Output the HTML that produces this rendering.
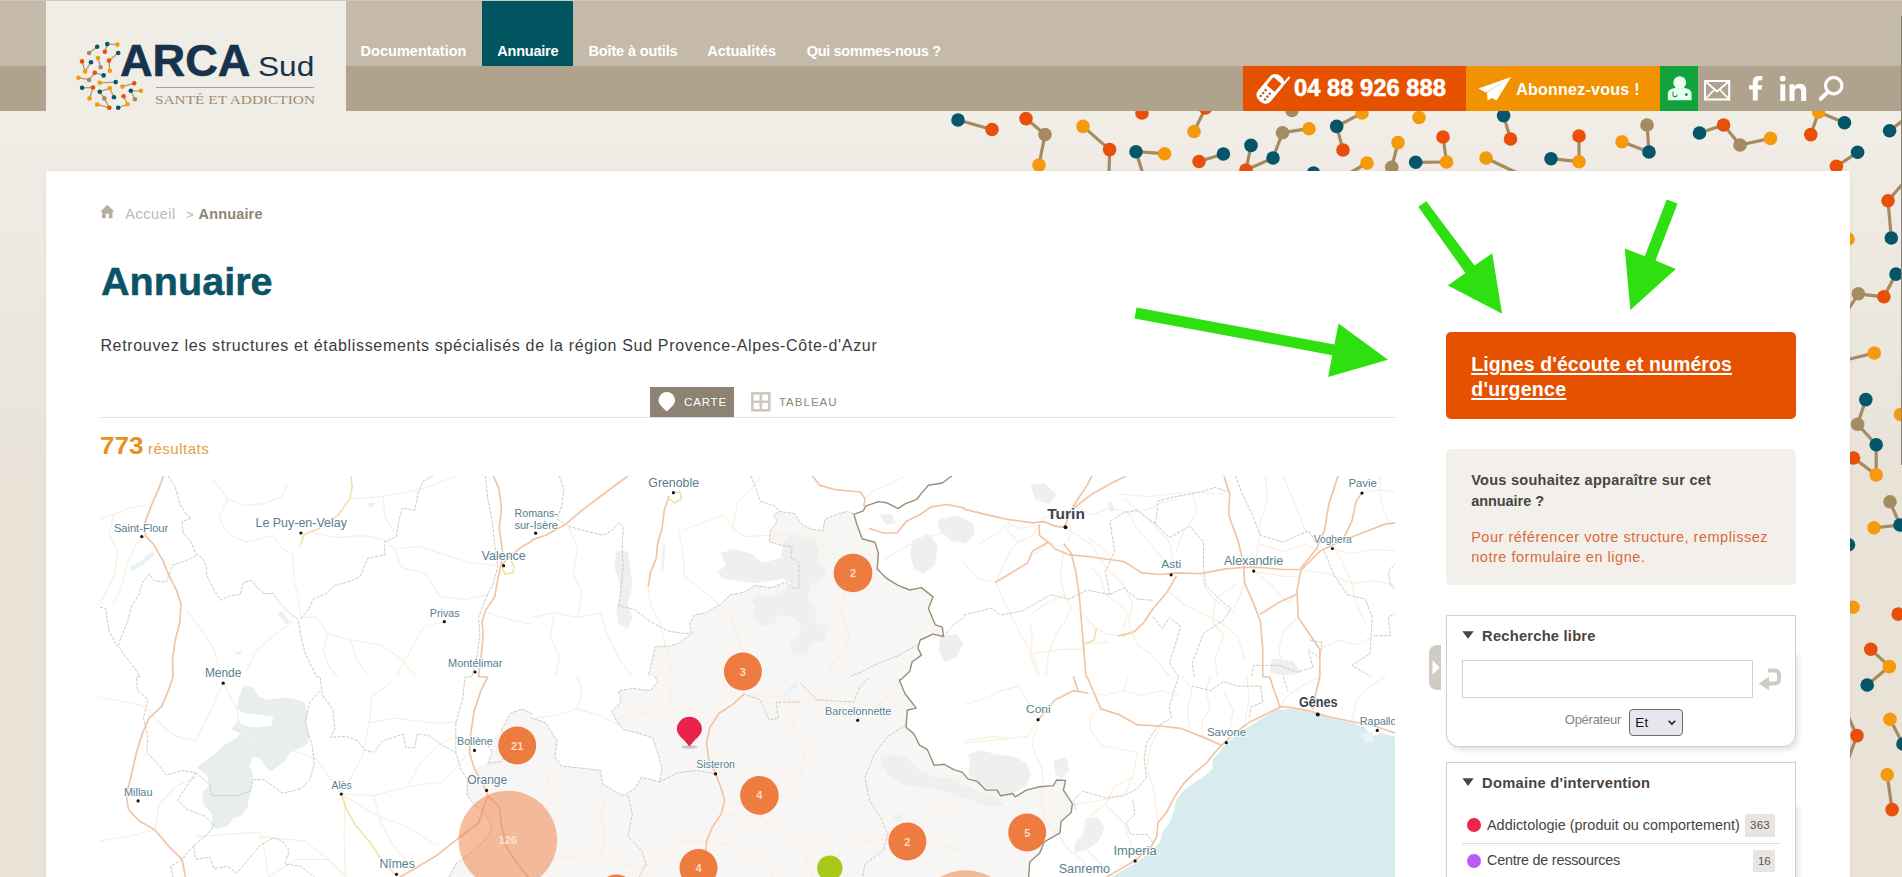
<!DOCTYPE html>
<html lang="fr">
<head>
<meta charset="utf-8">
<title>Annuaire - ARCA Sud</title>
<style>
*{box-sizing:border-box;margin:0;padding:0}
html,body{width:1902px;height:877px;overflow:hidden}
body{font-family:"Liberation Sans",sans-serif;background:linear-gradient(to bottom,#f1ede7 111px,#e8e2d7 500px);position:relative;color:#333}
.abs{position:absolute;white-space:nowrap;line-height:1}
.bx{position:absolute}
svg.full{position:absolute;left:0;top:0;width:1902px;height:877px;overflow:hidden}
</style>
</head>
<body>
<svg class="full" viewBox="0 0 1902 877"><g stroke="#a58b62" stroke-width="3.2" stroke-linecap="round"><line x1="958.0" y1="120.0" x2="992.0" y2="129.5"/><line x1="1026.0" y1="118.6" x2="1045.0" y2="134.5"/><line x1="1045.0" y1="134.5" x2="1039.0" y2="165.0"/><line x1="1083.0" y1="126.4" x2="1109.6" y2="149.6"/><line x1="1109.6" y1="149.6" x2="1109.0" y2="175.0"/><line x1="1136.0" y1="151.7" x2="1164.6" y2="153.7"/><line x1="1136.0" y1="151.7" x2="1143.0" y2="174.0"/><line x1="1194.0" y1="131.5" x2="1205.5" y2="108.0"/><line x1="1199.0" y1="161.5" x2="1223.4" y2="154.0"/><line x1="1251.0" y1="145.4" x2="1246.0" y2="170.0"/><line x1="1246.0" y1="170.0" x2="1273.0" y2="158.0"/><line x1="1273.0" y1="158.0" x2="1282.5" y2="132.7"/><line x1="1282.5" y1="132.7" x2="1309.0" y2="128.7"/><line x1="1336.7" y1="126.4" x2="1362.0" y2="113.0"/><line x1="1336.7" y1="126.4" x2="1343.0" y2="150.0"/><line x1="1398.0" y1="142.6" x2="1391.7" y2="167.3"/><line x1="1367.0" y1="163.0" x2="1350.0" y2="173.0"/><line x1="1415.7" y1="162.3" x2="1446.6" y2="162.0"/><line x1="1446.6" y1="162.0" x2="1443.0" y2="137.0"/><line x1="1503.6" y1="115.6" x2="1510.5" y2="139.0"/><line x1="1486.0" y1="158.0" x2="1515.0" y2="172.0"/><line x1="1579.0" y1="136.0" x2="1579.0" y2="161.7"/><line x1="1579.0" y1="161.7" x2="1551.0" y2="158.7"/><line x1="1647.0" y1="125.0" x2="1649.0" y2="152.0"/><line x1="1649.0" y1="152.0" x2="1622.0" y2="141.7"/><line x1="1699.5" y1="133.0" x2="1723.6" y2="125.0"/><line x1="1723.6" y1="125.0" x2="1740.0" y2="145.0"/><line x1="1740.0" y1="145.0" x2="1770.5" y2="138.4"/><line x1="1818.6" y1="112.0" x2="1810.8" y2="134.6"/><line x1="1818.6" y1="112.0" x2="1844.5" y2="122.7"/><line x1="1889.6" y1="130.8" x2="1906.0" y2="118.0"/><line x1="1857.6" y1="152.3" x2="1836.4" y2="166.3"/><line x1="1906.0" y1="180.0" x2="1888.0" y2="200.7"/><line x1="1888.0" y1="200.7" x2="1891.3" y2="238.0"/><line x1="1896.0" y1="274.1" x2="1883.9" y2="296.8"/><line x1="1883.9" y1="296.8" x2="1858.4" y2="293.8"/><line x1="1858.4" y1="293.8" x2="1846.0" y2="313.0"/><line x1="1874.3" y1="353.0" x2="1846.0" y2="360.0"/><line x1="1865.8" y1="399.6" x2="1857.6" y2="424.2"/><line x1="1857.6" y1="424.2" x2="1876.2" y2="444.8"/><line x1="1876.2" y1="444.8" x2="1876.2" y2="474.9"/><line x1="1876.2" y1="474.9" x2="1853.5" y2="458.0"/><line x1="1890.0" y1="501.8" x2="1900.0" y2="525.0"/><line x1="1900.0" y1="525.0" x2="1874.0" y2="527.8"/><line x1="1870.8" y1="649.3" x2="1889.4" y2="666.6"/><line x1="1889.4" y1="666.6" x2="1867.2" y2="685.0"/><line x1="1857.0" y1="735.6" x2="1846.0" y2="712.0"/><line x1="1857.0" y1="735.6" x2="1846.0" y2="765.0"/><line x1="1890.0" y1="719.2" x2="1903.0" y2="744.0"/><line x1="1887.2" y1="774.8" x2="1892.1" y2="809.6"/></g><g><circle cx="958.0" cy="120.0" r="6.8" fill="#05566a"/><circle cx="992.0" cy="129.5" r="6.8" fill="#e8500a"/><circle cx="1026.0" cy="118.6" r="6.8" fill="#e8500a"/><circle cx="1045.0" cy="134.5" r="6.8" fill="#a58b62"/><circle cx="1039.0" cy="165.0" r="6.8" fill="#f59a0c"/><circle cx="1083.0" cy="126.4" r="6.8" fill="#f59a0c"/><circle cx="1109.6" cy="149.6" r="6.8" fill="#e8500a"/><circle cx="1142.0" cy="113.0" r="6.8" fill="#e8500a"/><circle cx="1136.0" cy="151.7" r="6.8" fill="#05566a"/><circle cx="1164.6" cy="153.7" r="6.8" fill="#f59a0c"/><circle cx="1194.0" cy="131.5" r="6.8" fill="#f59a0c"/><circle cx="1205.5" cy="108.0" r="6.8" fill="#e8500a"/><circle cx="1199.0" cy="161.5" r="6.8" fill="#e8500a"/><circle cx="1223.4" cy="154.0" r="6.8" fill="#05566a"/><circle cx="1251.0" cy="145.4" r="6.8" fill="#05566a"/><circle cx="1246.0" cy="170.0" r="6.8" fill="#e8500a"/><circle cx="1273.0" cy="158.0" r="6.8" fill="#05566a"/><circle cx="1282.5" cy="132.7" r="6.8" fill="#a58b62"/><circle cx="1309.0" cy="128.7" r="6.8" fill="#f59a0c"/><circle cx="1292.0" cy="110.5" r="6.8" fill="#a58b62"/><circle cx="1336.7" cy="126.4" r="6.8" fill="#05566a"/><circle cx="1362.0" cy="113.0" r="6.8" fill="#f59a0c"/><circle cx="1343.0" cy="150.0" r="6.8" fill="#e8500a"/><circle cx="1398.0" cy="142.6" r="6.8" fill="#f59a0c"/><circle cx="1391.7" cy="167.3" r="6.8" fill="#a58b62"/><circle cx="1367.0" cy="163.0" r="6.8" fill="#f59a0c"/><circle cx="1313.5" cy="173.0" r="6.8" fill="#05566a"/><circle cx="1415.7" cy="162.3" r="6.8" fill="#05566a"/><circle cx="1446.6" cy="162.0" r="6.8" fill="#f59a0c"/><circle cx="1443.0" cy="137.0" r="6.8" fill="#e8500a"/><circle cx="1419.0" cy="117.5" r="6.8" fill="#f59a0c"/><circle cx="1503.6" cy="115.6" r="6.8" fill="#05566a"/><circle cx="1510.5" cy="139.0" r="6.8" fill="#e8500a"/><circle cx="1486.0" cy="158.0" r="6.8" fill="#f59a0c"/><circle cx="1579.0" cy="136.0" r="6.8" fill="#e8500a"/><circle cx="1579.0" cy="161.7" r="6.8" fill="#f59a0c"/><circle cx="1551.0" cy="158.7" r="6.8" fill="#05566a"/><circle cx="1647.0" cy="125.0" r="6.8" fill="#a58b62"/><circle cx="1649.0" cy="152.0" r="6.8" fill="#05566a"/><circle cx="1622.0" cy="141.7" r="6.8" fill="#f59a0c"/><circle cx="1699.5" cy="133.0" r="6.8" fill="#05566a"/><circle cx="1723.6" cy="125.0" r="6.8" fill="#e8500a"/><circle cx="1740.0" cy="145.0" r="6.8" fill="#a58b62"/><circle cx="1770.5" cy="138.4" r="6.8" fill="#f59a0c"/><circle cx="1818.6" cy="112.0" r="6.8" fill="#f59a0c"/><circle cx="1810.8" cy="134.6" r="6.8" fill="#e8500a"/><circle cx="1844.5" cy="122.7" r="6.8" fill="#05566a"/><circle cx="1889.6" cy="130.8" r="6.8" fill="#05566a"/><circle cx="1857.6" cy="152.3" r="6.8" fill="#05566a"/><circle cx="1836.4" cy="166.3" r="6.8" fill="#e8500a"/><circle cx="1888.0" cy="200.7" r="6.8" fill="#e8500a"/><circle cx="1891.3" cy="238.0" r="6.8" fill="#05566a"/><circle cx="1848.0" cy="239.0" r="6.8" fill="#f59a0c"/><circle cx="1896.0" cy="274.1" r="6.8" fill="#05566a"/><circle cx="1883.9" cy="296.8" r="6.8" fill="#e8500a"/><circle cx="1858.4" cy="293.8" r="6.8" fill="#a58b62"/><circle cx="1874.3" cy="353.0" r="6.8" fill="#f59a0c"/><circle cx="1865.8" cy="399.6" r="6.8" fill="#05566a"/><circle cx="1857.6" cy="424.2" r="6.8" fill="#a58b62"/><circle cx="1876.2" cy="444.8" r="6.8" fill="#05566a"/><circle cx="1876.2" cy="474.9" r="6.8" fill="#f59a0c"/><circle cx="1853.5" cy="458.0" r="6.8" fill="#e8500a"/><circle cx="1900.5" cy="414.5" r="6.8" fill="#f59a0c"/><circle cx="1890.0" cy="501.8" r="6.8" fill="#a58b62"/><circle cx="1900.0" cy="525.0" r="6.8" fill="#05566a"/><circle cx="1874.0" cy="527.8" r="6.8" fill="#f59a0c"/><circle cx="1848.5" cy="544.8" r="6.8" fill="#05566a"/><circle cx="1853.0" cy="607.3" r="6.8" fill="#f59a0c"/><circle cx="1898.2" cy="614.1" r="6.8" fill="#e8500a"/><circle cx="1870.8" cy="649.3" r="6.8" fill="#e8500a"/><circle cx="1889.4" cy="666.6" r="6.8" fill="#f59a0c"/><circle cx="1867.2" cy="685.0" r="6.8" fill="#05566a"/><circle cx="1857.0" cy="735.6" r="6.8" fill="#e8500a"/><circle cx="1890.0" cy="719.2" r="6.8" fill="#f59a0c"/><circle cx="1903.0" cy="744.0" r="6.8" fill="#05566a"/><circle cx="1887.2" cy="774.8" r="6.8" fill="#f59a0c"/><circle cx="1892.1" cy="809.6" r="6.8" fill="#e8500a"/></g></svg>
<div class="bx" style="left:0px;top:0px;width:1902px;height:66px;background:#c5baaa;"></div>
<div class="bx" style="left:0px;top:66px;width:1902px;height:45px;background:#b0a38d;"></div>
<div class="bx" style="left:46px;top:1px;width:300px;height:110px;background:#f0ece6;"></div>
<div class="bx" style="left:482px;top:1px;width:91px;height:65px;background:#005561;"></div>
<div class="bx" style="left:0px;top:0px;width:1902px;height:1px;background:#cdc8c2;"></div>
<div class="bx" style="left:1243px;top:66px;width:223px;height:45px;background:#e65100;"></div>
<div class="bx" style="left:1466px;top:66px;width:194px;height:45px;background:#f39200;"></div>
<div class="bx" style="left:1660px;top:66px;width:38px;height:45px;background:#14a23c;"></div>
<div class="bx" style="left:46px;top:171px;width:1804px;height:706px;background:#fff;box-shadow:0 0 3px rgba(90,70,40,.10);"></div>
<div class="bx" style="left:100px;top:417px;width:1295px;height:1px;background:#e4e2de;"></div>
<div class="bx" style="left:650px;top:387px;width:84px;height:30px;background:#8e8372;"></div>
<div class="bx" style="left:155.7px;top:87px;width:158.5px;height:1px;background:#9aa3ab;"></div>
<div class="bx" style="left:1446px;top:332px;width:350px;height:87px;background:#e65100;border-radius:5px;"></div>
<div class="bx" style="left:1446px;top:449px;width:350px;height:136px;background:#f3f0eb;border-radius:5px;"></div>
<div class="bx" style="left:1429px;top:645px;width:12px;height:45px;background:#d0ccc5;border-radius:8px 0 0 8px;"></div>
<div class="bx" style="left:1447px;top:652px;width:349px;height:95px;background:#fff;border-radius:0 0 13px 13px;box-shadow:2px 3px 5px rgba(110,100,90,.20);"></div>
<div class="bx" style="left:1447px;top:803px;width:349px;height:100px;background:#fff;box-shadow:2px 3px 5px rgba(110,100,90,.20);"></div>
<div class="bx" style="left:1446px;top:615px;width:350px;height:132px;background:#fff;border:1px solid #d3cfc8;border-radius:0 0 13px 13px;"></div>
<div class="bx" style="left:1446px;top:762px;width:350px;height:140px;background:#fff;border:1px solid #d3cfc8;"></div>
<div class="bx" style="left:1462px;top:660px;width:291px;height:38px;background:#fff;border:1px solid #d5d1ca;"></div>
<div class="bx" style="left:1629px;top:708.5px;width:53.7px;height:27.3px;background:#e6e6ef;border:1px solid #6b6b6b;border-radius:4px;"></div>
<div class="bx" style="left:1745px;top:814.2px;width:30.1px;height:22.5px;background:#e8e5e0;"></div>
<div class="bx" style="left:1752.6px;top:850px;width:22.5px;height:21.6px;background:#e8e5e0;"></div>
<div class="bx" style="left:1462px;top:843px;width:318px;height:1px;background:#e0ddd8;"></div>
<div class="bx" style="left:1466.7px;top:817.6px;width:14.4px;height:14.4px;background:#e8274b;border-radius:50%;"></div>
<div class="bx" style="left:1466.7px;top:853.5px;width:14.4px;height:14.4px;background:#b85cf5;border-radius:50%;"></div>
<div class="bx" style="left:1901px;top:16px;width:1px;height:449px;background:#857f76;"></div>
<svg class="full" viewBox="0 0 1902 877"><g stroke="#b9986a" stroke-width="1.3" stroke-linecap="round"><line x1="97.2" y1="46.8" x2="89.1" y2="53.0"/><line x1="107.3" y1="44.1" x2="117.4" y2="44.6"/><line x1="107.3" y1="44.1" x2="104.8" y2="51.8"/><line x1="118.2" y1="53.0" x2="109.0" y2="60.6"/><line x1="98.0" y1="58.0" x2="100.6" y2="67.3"/><line x1="82.0" y1="61.4" x2="85.1" y2="71.5"/><line x1="91.0" y1="62.2" x2="85.1" y2="71.5"/><line x1="109.0" y1="60.6" x2="109.8" y2="70.7"/><line x1="94.7" y1="72.7" x2="89.1" y2="79.9"/><line x1="78.4" y1="77.7" x2="89.1" y2="79.9"/><line x1="94.7" y1="72.7" x2="103.6" y2="75.4"/><line x1="99.7" y1="82.8" x2="115.7" y2="82.1"/><line x1="134.2" y1="83.3" x2="122.4" y2="86.6"/><line x1="82.1" y1="87.8" x2="93.0" y2="87.5"/><line x1="93.0" y1="87.5" x2="89.6" y2="98.4"/><line x1="109.8" y1="88.3" x2="99.7" y2="91.7"/><line x1="109.8" y1="88.3" x2="114.0" y2="97.2"/><line x1="130.8" y1="90.8" x2="140.9" y2="90.8"/><line x1="130.8" y1="90.8" x2="135.0" y2="99.3"/><line x1="104.3" y1="98.4" x2="109.3" y2="107.7"/><line x1="97.2" y1="104.6" x2="109.3" y2="107.7"/><line x1="123.6" y1="96.2" x2="127.5" y2="104.3"/><line x1="118.2" y1="107.7" x2="127.5" y2="104.3"/><line x1="104.3" y1="98.4" x2="99.7" y2="91.7"/></g><circle cx="97.2" cy="46.8" r="2.3" fill="#05566a"/><circle cx="107.3" cy="44.1" r="2.3" fill="#05566a"/><circle cx="117.4" cy="44.6" r="2.3" fill="#f59a0c"/><circle cx="89.1" cy="53.0" r="2.3" fill="#a58b62"/><circle cx="104.8" cy="51.8" r="2.3" fill="#e8500a"/><circle cx="118.2" cy="53.0" r="2.3" fill="#05566a"/><circle cx="98.0" cy="58.0" r="2.3" fill="#f59a0c"/><circle cx="82.0" cy="61.4" r="2.3" fill="#e8500a"/><circle cx="91.0" cy="62.2" r="2.3" fill="#05566a"/><circle cx="109.0" cy="60.6" r="2.3" fill="#e8500a"/><circle cx="100.6" cy="67.3" r="2.3" fill="#a58b62"/><circle cx="85.1" cy="71.5" r="2.3" fill="#f59a0c"/><circle cx="94.7" cy="72.7" r="2.3" fill="#e8500a"/><circle cx="103.6" cy="75.4" r="2.3" fill="#05566a"/><circle cx="109.8" cy="70.7" r="2.3" fill="#f59a0c"/><circle cx="78.4" cy="77.7" r="2.3" fill="#f59a0c"/><circle cx="89.1" cy="79.9" r="2.3" fill="#a58b62"/><circle cx="99.7" cy="82.8" r="2.3" fill="#f59a0c"/><circle cx="115.7" cy="82.1" r="2.3" fill="#05566a"/><circle cx="134.2" cy="83.3" r="2.3" fill="#e8500a"/><circle cx="122.4" cy="86.6" r="2.3" fill="#f59a0c"/><circle cx="82.1" cy="87.8" r="2.3" fill="#05566a"/><circle cx="93.0" cy="87.5" r="2.3" fill="#e8500a"/><circle cx="109.8" cy="88.3" r="2.3" fill="#f59a0c"/><circle cx="99.7" cy="91.7" r="2.3" fill="#05566a"/><circle cx="130.8" cy="90.8" r="2.3" fill="#05566a"/><circle cx="140.9" cy="90.8" r="2.3" fill="#f59a0c"/><circle cx="89.6" cy="98.4" r="2.3" fill="#f59a0c"/><circle cx="104.3" cy="98.4" r="2.3" fill="#a58b62"/><circle cx="114.0" cy="97.2" r="2.3" fill="#05566a"/><circle cx="123.6" cy="96.2" r="2.3" fill="#e8500a"/><circle cx="135.0" cy="99.3" r="2.3" fill="#a58b62"/><circle cx="97.2" cy="104.6" r="2.3" fill="#f59a0c"/><circle cx="109.3" cy="107.7" r="2.3" fill="#e8500a"/><circle cx="118.2" cy="107.7" r="2.3" fill="#05566a"/><circle cx="127.5" cy="104.3" r="2.3" fill="#f59a0c"/><g transform="translate(1270.4,88.8) rotate(40)"><rect x="-8.3" y="-16.2" width="16.6" height="32.4" rx="7" fill="#fff"/><rect x="-5.2" y="-11" width="10.4" height="10.6" fill="#e65100"/><g fill="#b4532a"><rect x="-3.9" y="3" width="2.2" height="2.2"/><rect x="1.6" y="3" width="2.2" height="2.2"/><rect x="-3.9" y="6.8" width="2.2" height="2.2"/><rect x="1.6" y="6.8" width="2.2" height="2.2"/><rect x="-3.9" y="10.6" width="2.2" height="2.2"/><rect x="1.6" y="10.6" width="2.2" height="2.2"/></g><rect x="6" y="-21.5" width="2.1" height="9" fill="#fff"/></g><path d="M1478.4 88.5L1511 77L1486 92.6Z M1487 92.6L1511 77L1496.6 100.4L1491.7 97.9L1487.6 100.6Z" fill="#fff"/><circle cx="1679.7" cy="82.6" r="6.4" fill="#e6fff0"/><path d="M1667.8 100.2v-6.2q0-4.6 5-5.6l3-.6q3.9 2.6 7.8 0l3 .6q5 1 5 5.6v6.2z" fill="#e6fff0"/><path d="M1673 91.5v3.2a2 2 0 0 0 4 0" fill="none" stroke="#14a23c" stroke-width="1.1"/><circle cx="1686.3" cy="94.5" r="1.5" fill="#14a23c"/><g fill="none" stroke="#fff" stroke-width="2"><rect x="1705" y="81" width="24.2" height="18.5"/><path d="M1705 81l12.1 10.5L1729.2 81M1705 99.5l9-9.5M1729.2 99.5l-9-9.5" stroke-width="1.8"/></g><path d="M1752.8 100.5v-11h-3.8v-4.3h3.8v-3.3q0-5.8 6-5.8h3.5v4.2h-2.3q-2.2 0-2.2 2.1v2.8h4.4l-.6 4.3h-3.8v11z" fill="#fff"/><g fill="#fff"><rect x="1780.3" y="84.3" width="5" height="16.6"/><circle cx="1782.8" cy="78.6" r="2.9"/><path d="M1789.5 84.3h4.8v2.3q1.8-2.8 5.6-2.8 6.3 0 6.3 7v10.1h-5v-9q0-3.7-3.1-3.7-3.6 0-3.6 4v8.7h-5z"/></g><g fill="none" stroke="#fff" stroke-linecap="round"><circle cx="1833.7" cy="85.6" r="8.2" stroke-width="3.2"/><path d="M1827.2 92.6L1820.8 98.8" stroke-width="4"/></g><path d="M100.3 211.8L107.3 204.8L114.3 211.8h-1.8v6.5h-3.6v-4.6h-3.2v4.6h-3.6v-6.5z" fill="#b5ae9f"/><path d="M666.8 392a8.3 8.3 0 0 1 8.3 8.3c0 4.2-4.6 7.6-8.3 11.3c-3.7-3.7-8.3-7.1-8.3-11.3a8.3 8.3 0 0 1 8.3-8.3z" fill="#fff"/><g fill="none" stroke="#cfc8bd" stroke-width="2.6"><rect x="752.3" y="393.3" width="17" height="17"/><path d="M760.8 393v17.6M752 401.8h17.6"/></g><path d="M1462.4 631.2h11.3l-5.65 7.6z M1462.4 778.3h11.3l-5.65 7.6z" fill="#4a443c"/><path d="M1432.5 660.3l7.2 7.2l-7.2 7.2z" fill="#fff"/><path d="M1768 670.5h6.5q4.5 0 4.5 4.5v4q0 4.5-4.5 4.5h-6.5" fill="none" stroke="#d0ccc5" stroke-width="4"/><path d="M1758.6 683.5l10.5-7v14z" fill="#d0ccc5"/><path d="M1668.6 720.8l3.3 3.3l3.3-3.3" fill="none" stroke="#222" stroke-width="1.6"/></svg>
<svg class="full" viewBox="0 0 1902 877"><defs><clipPath id="mc"><rect x="100" y="476" width="1295" height="401"/></clipPath></defs><g clip-path="url(#mc)"><rect x="100" y="476" width="1296" height="401" fill="#fff"/><path d="M853.6 513.6L846.8 511.4L835.4 514.8L825.1 519.3L822.8 530.7L812.6 529.6L802.3 525.0L794.3 513.6L779.5 511.4L773.8 514.8L777.2 521.6L770.4 530.7L769.2 542.1L782.9 545.6L792.0 546.7L790.9 558.1L798.9 562.7L798.9 587.8L792.0 587.8L785.2 582.1L771.5 587.8L754.4 585.5L744.1 592.3L730.4 594.6L721.3 603.7L705.4 612.9L694.0 615.1L689.4 624.3L691.7 633.4L678.0 643.7L668.9 645.9L655.2 647.1L648.3 676.0L655.2 677.0L657.5 681.6L650.6 690.7L632.4 688.4L618.7 690.7L621.0 702.1L611.8 711.2L616.4 720.3L623.2 729.5L641.5 734.0L652.9 738.6L657.5 752.3L662.0 768.2L659.7 781.9L641.5 777.4L634.6 788.8L623.2 795.6L614.1 791.1L602.7 784.2L600.4 770.5L582.2 768.2L561.7 766.0L554.8 756.8L557.1 740.9L545.7 722.6L532.0 718.1L532.0 713.5L522.0 708.9L510.6 713.5L501.5 729.5L487.8 745.4L492.3 752.3L487.8 763.7L474.1 768.2L467.2 779.6L467.2 795.6L474.1 804.7L485.5 813.9L492.3 827.5L487.8 836.7L474.1 850.4L455.8 864.0L449.0 877.0L450.0 880.0L1030.0 880.0L1028.5 878.9L1029.7 862.0L1039.8 853.0L1044.3 841.8L1060.0 832.8L1061.1 821.6L1071.2 812.6L1072.4 803.6L1063.4 790.1L1065.6 780.4L1056.6 780.0L1053.3 785.6L1039.8 786.7L1026.3 790.1L1015.1 796.9L1012.8 793.5L1000.4 795.7L997.1 790.1L985.8 790.1L976.9 781.1L967.9 778.9L962.2 772.1L954.4 769.9L944.3 764.3L934.2 765.4L927.4 749.7L919.6 745.2L913.9 733.9L906.1 727.2L907.2 710.3L916.2 708.1L904.9 693.5L899.3 680.0L900.5 680.0L909.8 671.3L912.1 662.0L921.4 655.1L917.9 648.1L920.2 640.0L933.0 634.1L943.5 636.5L942.3 627.2L935.3 624.8L928.4 608.6L933.0 596.9L921.4 587.6L909.8 590.0L898.1 585.3L886.5 578.3L877.2 569.0L878.4 552.7L874.9 542.3L862.1 538.8L856.3 522.5L854.0 514.4Z" fill="#f7f6f4"/><g fill="#e8eeec"><path d="M243.9 685.5L253.0 687.3L258.5 696.4L267.6 700.1L278.5 698.2L291.3 698.2L304.1 701.9L307.7 712.8L305.9 723.8L309.6 734.7L307.7 743.9L296.8 749.3L289.5 753.0L285.8 760.3L278.5 765.8L271.2 771.2L265.8 767.6L260.3 758.5L253.0 756.6L249.3 765.8L253.0 774.9L251.2 785.8L249.3 796.8L247.5 807.7L242.0 815.0L232.9 818.7L227.4 826.0L216.5 829.6L211.0 826.0L212.8 815.0L203.7 804.1L201.9 793.1L209.2 785.8L207.4 774.9L196.4 767.6L203.7 762.1L216.5 753.0L225.6 743.9L236.6 738.4L240.2 732.9L231.1 729.3L238.4 720.1L242.0 725.6L256.6 727.4L271.2 725.6L273.1 716.5L260.3 714.7L243.9 712.8L236.6 709.2L238.4 698.2Z"/></g><g fill="#edf0ee"><path d="M880.2 758.7L893.7 754.2L904.9 756.4L918.4 769.9L934.2 776.6L949.9 778.9L965.6 785.6L981.3 792.4L999.3 799.1L1003.8 805.8L985.8 805.8L967.9 799.1L949.9 792.4L927.4 787.9L904.9 785.6L887.0 774.4Z"/><path d="M967.9 754.2L981.3 749.7L994.8 754.2L1012.8 756.4L1026.3 763.1L1030.8 774.4L1026.3 785.6L1015.1 792.4L1000.4 794.6L985.8 787.9L976.9 781.1L967.9 774.4L970.1 763.1Z"/><path d="M1053.3 760.9L1066.7 756.4L1069.0 769.9L1062.2 778.9L1055.5 774.4Z"/><path d="M1084.7 819.3L1098.2 817.1L1104.9 828.3L1098.2 841.8L1084.7 850.8L1073.5 853.0L1075.7 841.8L1084.7 832.8Z"/><path d="M937.7 520.2L956.3 515.5L972.6 522.5L974.9 534.1L965.6 543.4L951.6 541.1L940.0 531.8Z"/><path d="M912.1 541.1L928.4 534.1L937.7 545.8L935.3 564.4L923.7 573.7L914.4 569.0L909.8 555.1Z"/><path d="M940.0 636.5L956.3 634.1L963.3 643.4L956.3 657.4L944.7 662.0L938.8 650.4Z"/><path d="M879.5 515.5L891.2 513.2L895.8 522.5L886.5 524.8Z"/><path d="M1030.7 485.3L1044.7 483.0L1056.3 494.6L1049.3 503.9L1035.3 499.3Z"/><path d="M720.2 553.6L732.7 549.0L751.0 553.6L762.4 562.7L780.6 558.1L782.9 544.4L789.8 535.3L801.2 537.6L814.8 539.9L819.4 551.3L817.1 562.7L826.3 567.2L824.0 578.6L810.3 585.5L808.0 599.2L817.1 612.9L814.8 622.0L828.5 626.5L824.0 640.2L810.3 644.8L805.7 653.9L794.3 653.9L789.8 644.8L798.9 635.7L801.2 624.3L792.0 617.4L778.4 615.1L773.8 624.3L760.1 626.5L753.3 617.4L755.5 606.0L751.0 599.2L760.1 594.6L771.5 596.9L785.2 590.1L789.8 583.2L782.9 578.6L769.2 580.9L755.5 583.2L737.3 580.9L721.3 578.6L717.9 571.8L725.9 565.0Z"/><path d="M616.4 551.3L627.8 551.3L630.1 567.2L632.4 585.5L627.8 603.7L632.4 617.4L627.8 628.8L618.7 624.3L616.4 608.3L621.0 594.6L618.7 578.6L614.1 567.2Z"/><path d="M1271.9 658.5L1292.5 660.8L1301.6 672.2L1283.3 676.0L1269.7 672.2Z"/></g><path d="M1110.0 877.7L1123.7 869.7L1137.4 861.8L1153.3 850.4L1160.2 841.2L1162.4 832.1L1169.3 823.0L1173.9 811.6L1176.1 800.2L1183.0 791.1L1192.1 784.2L1205.8 775.1L1212.6 768.2L1212.6 759.1L1219.5 752.3L1226.3 743.1L1237.7 734.0L1251.4 724.9L1262.8 718.1L1276.5 710.1L1290.2 708.9L1306.2 711.2L1319.8 714.6L1333.5 719.2L1351.8 722.6L1365.5 728.3L1372.3 736.3L1381.4 732.9L1397.4 737.4L1397.4 877.7Z" fill="#d8ebef"/><g fill="#e9f3f6"><path d="M129.7 567.2L141.1 560.4L152.5 551.3L154.7 554.7L143.3 565.0L131.9 571.8Z"/><path d="M276.8 612.9L282.5 611.7L290.5 622.0L285.9 624.3Z"/><path d="M366.9 503.4L373.7 502.2L374.9 505.7L369.2 506.8Z"/><path d="M234.6 651.6L241.4 651.2L241.9 654.4L235.7 654.6Z"/><path d="M782.9 693.0L789.8 686.1L796.6 681.6L798.9 685.0L792.0 690.7L785.2 696.4Z"/><path d="M892.4 816.1L901.5 813.9L902.7 820.7L894.7 821.8Z"/><path d="M663.2 544.4L665.4 544.4L664.3 562.7L662.0 576.4L660.9 562.7Z"/><path d="M1107.7 503.4L1112.3 502.2L1114.5 510.2L1110.0 512.5Z"/><path d="M1360.9 734.0L1372.3 731.7L1373.4 740.9L1365.5 743.1Z"/></g><g fill="none" stroke-linejoin="round" stroke-linecap="round"><g stroke="#fbeee0" stroke-width="1.2"><path d="M1041.6 521.6L1032.4 535.3L1018.7 542.1L1009.6 551.3L1002.8 567.2L995.9 582.1"/><path d="M1039.3 525.0L1021.0 528.5L1009.6 523.9L1007.3 530.7L1018.7 542.1"/><path d="M1048.4 542.1L1039.3 551.3L1030.1 555.8"/><path d="M1064.4 544.4L1062.1 562.7L1059.8 576.4L1064.4 594.6L1071.2 608.3L1064.4 622.0L1055.2 635.7L1048.4 653.9L1046.1 676.0"/><path d="M1030.1 622.0L1032.4 640.2L1030.1 653.9L1037.0 676.0"/><path d="M1032.4 612.9L1046.1 603.7L1064.4 594.6"/><path d="M1082.6 612.9L1091.7 624.3L1096.3 628.8L1105.4 633.4L1119.1 635.7"/><path d="M1087.2 537.6L1100.9 546.7L1110.0 555.8"/><path d="M1091.7 567.2L1100.9 578.6L1105.4 594.6L1119.1 603.7L1128.2 612.9L1123.7 626.5"/><path d="M1073.5 505.7L1091.7 514.8L1110.0 507.9L1128.2 512.5L1146.5 510.2L1160.2 503.4L1178.4 498.8"/><path d="M1128.2 512.5L1137.4 528.5L1151.0 544.4L1162.4 558.1L1169.3 567.2"/><path d="M1039.3 525.0L1043.8 517.1L1055.2 514.8L1066.6 519.3L1071.2 528.5L1068.9 539.9L1059.8 546.7L1048.4 542.1"/><path d="M1260.5 544.4L1283.3 551.3L1306.2 544.4L1319.8 551.3"/><path d="M1301.6 569.5L1329.0 574.1L1351.8 583.2L1374.6 580.9L1396.0 585.5"/><path d="M1333.5 544.4L1342.6 562.7L1351.8 583.2L1356.3 603.7L1365.5 622.0"/><path d="M1201.2 573.6L1205.8 590.1L1219.5 603.7L1233.2 612.9L1244.6 583.2"/><path d="M1298.2 617.4L1283.3 631.1L1278.8 649.4L1283.3 676.0"/><path d="M1319.8 649.4L1338.1 640.2L1356.3 644.8L1374.6 635.7"/><path d="M964.0 704.4L982.2 699.8L1000.5 690.7L1018.7 686.1L1038.1 719.7"/><path d="M1087.2 693.0L1105.4 695.2L1123.7 690.7L1141.9 695.2L1160.2 690.7L1178.4 695.2"/><path d="M1123.7 690.7L1128.2 677.0"/><path d="M1279.9 706.7L1287.9 695.2L1301.6 686.1L1319.8 677.0"/><path d="M1203.5 737.4L1201.2 722.6L1210.4 708.9L1205.8 690.7L1210.4 677.0"/><path d="M1059.8 836.7L1068.9 850.4L1082.6 859.5L1091.7 877.0"/><path d="M1105.4 804.7L1091.7 813.9L1082.6 832.1L1087.2 850.4L1100.9 864.0L1110.0 877.0"/><path d="M113.7 514.8L109.1 535.3L118.2 553.6L113.7 576.4L104.6 594.6L100.0 603.7"/><path d="M145.6 535.8L136.5 544.4L127.4 562.7L122.8 583.2L113.7 603.7"/><path d="M227.7 498.8L218.6 517.1L227.7 533.0L246.0 542.1L273.4 535.3"/><path d="M328.1 633.4L323.5 649.4L328.1 665.3L337.2 676.0"/><path d="M385.1 539.9L394.3 549.0"/><path d="M350.9 640.2L355.5 658.5L369.2 676.0"/><path d="M145.6 706.7L159.3 722.6L175.3 736.3L195.8 740.9L223.2 683.2"/><path d="M154.7 829.8L159.3 804.7L175.3 786.5L195.8 777.4"/><path d="M268.8 877.0L296.2 859.5L328.1 859.5"/><path d="M373.7 795.6L380.6 823.0L396.5 850.4L414.8 868.6"/><path d="M407.9 786.5L419.3 763.7L437.6 745.4L455.8 736.3"/><path d="M369.2 722.6L396.5 718.1L428.5 722.6L455.8 722.6"/><path d="M554.8 612.9L550.2 635.7L559.4 658.5L554.8 676.0"/><path d="M577.6 617.4L582.2 594.6L573.1 571.8L577.6 549.0L568.5 526.2"/><path d="M732.7 528.5L737.3 503.4L751.0 489.7L760.1 476.0"/><path d="M865.0 498.8L874.2 489.7L887.8 485.1L906.1 476.0"/><path d="M577.6 708.9L582.2 690.7L577.6 677.0"/><path d="M600.4 859.5L605.0 836.7L600.4 813.9L607.3 795.6"/><path d="M706.5 841.2L737.3 845.8L760.1 859.5L773.8 877.0"/><path d="M810.3 850.4L805.7 864.0L812.6 877.0"/><path d="M907.2 841.7L919.8 823.0L938.0 813.9L956.3 804.7"/><path d="M100.0 519.3L113.7 514.8L129.7 507.9L145.6 505.7"/><path d="M214.1 480.6L227.7 498.8L246.0 505.7L264.2 503.4L282.5 496.5L287.0 485.1"/><path d="M273.4 535.3L282.5 549.0L292.7 553.6L293.9 578.6L298.4 599.2L300.7 617.4"/><path d="M312.1 533.0L339.5 537.6L362.3 535.3L385.1 539.9"/><path d="M394.3 549.0L419.3 546.7L442.2 553.6L469.5 562.7L499.2 566.1"/><path d="M394.3 549.0L401.1 567.2L426.2 574.1L439.9 596.9L465.0 599.2L487.8 594.6"/><path d="M300.7 617.4L316.7 617.4L328.1 633.4L350.9 640.2L380.6 644.8L401.1 658.5L414.8 676.0"/><path d="M444.4 622.0L423.9 626.5L405.7 658.5L396.5 676.0"/><path d="M186.7 610.6L202.6 631.1L214.1 649.4L218.6 667.6L223.2 676.0"/><path d="M292.7 622.0L273.4 635.7L255.1 651.6L246.0 672.2"/><path d="M487.8 612.9L510.6 619.7L532.0 624.3"/><path d="M382.8 496.5L385.1 517.1L394.3 533.0"/><path d="M350.9 498.8L382.8 496.5L419.3 489.7L455.8 476.0"/><path d="M223.2 683.2L236.9 708.9L241.4 734.0L264.2 747.7L291.6 750.0L316.7 759.1L341.3 794.0"/><path d="M100.0 697.5L127.4 702.1L145.6 706.7"/><path d="M341.3 794.0L362.3 756.8L369.2 722.6L371.4 697.5L392.0 681.6"/><path d="M341.3 794.0L373.7 795.6L407.9 786.5L442.2 781.9L469.5 752.3"/><path d="M341.3 794.0L373.7 813.9L407.9 827.5L437.6 845.8"/><path d="M345.2 797.9L344.1 836.7L345.2 877.0"/><path d="M100.0 841.2L127.4 836.7L154.7 829.8"/><path d="M195.8 836.7L227.7 834.4L259.7 832.1L264.2 850.4L268.8 877.0"/><path d="M259.7 836.7L305.3 841.2L328.1 859.5L346.4 877.0"/><path d="M678.0 528.5L682.5 551.3L684.8 576.4L696.2 585.5L707.6 594.6L721.3 606.0L730.4 612.9L737.3 635.7L744.1 653.9"/><path d="M682.5 530.7L705.4 521.6L723.6 514.8L732.7 528.5L744.1 536.4L769.2 535.3L796.6 534.2L817.1 539.9L835.4 555.8L852.5 572.9L844.5 594.6L841.1 612.9L849.1 635.7L844.5 649.4L833.1 663.0L828.5 676.0"/><path d="M532.0 617.4L554.8 612.9L577.6 617.4L600.4 612.9L607.3 635.7L618.7 658.5L632.4 676.0"/><path d="M648.3 585.5L650.6 603.7L659.7 622.0L666.6 649.4L673.4 676.0"/><path d="M883.3 560.4L901.5 549.0L919.8 539.9L942.6 533.0L964.0 530.7"/><path d="M532.0 718.1L554.8 715.8L577.6 708.9L600.4 715.8L618.7 724.9"/><path d="M668.9 677.0L671.1 695.2L668.9 711.2L634.6 713.5L614.1 720.3"/><path d="M721.3 813.9L737.3 816.1L760.1 816.1L769.2 825.3L792.0 834.4L810.3 850.4L828.5 841.2L835.4 857.2"/><path d="M760.1 816.1L782.9 795.6L801.2 772.8L805.7 745.4L792.0 722.6L798.9 702.1L782.9 697.5L744.1 694.1"/><path d="M798.9 702.1L828.5 699.8L857.7 720.3L887.8 697.5L899.2 681.6"/><path d="M532.0 859.5L566.2 857.2L600.4 859.5L641.5 868.6L680.3 841.2L706.5 841.2"/><path d="M835.4 857.2L862.7 841.2L887.8 839.0L907.2 841.7L942.6 845.8L964.0 850.4"/><path d="M541.1 804.7L550.2 786.5L545.7 768.2"/><path d="M977.7 544.4L998.2 533.0L1009.6 521.6"/><path d="M964.0 562.7L977.7 578.6L995.9 582.1L1005.1 603.7L1021.0 635.7L1032.4 653.9L1039.3 676.0"/><path d="M1032.4 653.9L1059.8 649.4L1083.8 649.4"/><path d="M1084.9 643.7L1107.7 642.1"/><path d="M1064.4 527.3L1091.7 544.4L1105.4 567.2L1123.7 585.5L1132.8 603.7L1128.2 622.0L1137.4 644.8L1151.0 653.9L1169.3 676.0"/><path d="M1123.7 498.8L1151.0 521.6L1169.3 542.1L1176.1 572.9"/><path d="M1169.3 592.3L1183.0 603.7L1201.2 612.9L1219.5 622.0L1237.7 635.7L1244.6 658.5"/><path d="M1119.1 494.2L1146.5 496.5L1192.1 492.0L1224.0 494.2"/><path d="M1192.1 492.0L1196.7 512.5L1183.0 533.0L1176.1 551.3"/><path d="M1253.7 571.1L1271.9 585.5L1287.9 603.7L1295.9 594.6"/><path d="M1253.7 571.1L1283.3 576.4L1299.3 576.4"/><path d="M1265.1 476.0L1267.4 498.8L1260.5 521.6L1258.3 544.4L1253.7 571.1"/><path d="M1332.4 548.5L1351.8 553.6L1374.6 549.0L1396.0 551.3"/><path d="M1362.0 493.1L1379.1 489.7L1396.0 492.0"/><path d="M1283.3 476.0L1294.7 503.4L1306.2 533.0"/><path d="M1379.1 476.0L1381.4 503.4L1388.3 521.6"/><path d="M1237.7 583.2L1214.9 599.2L1212.6 622.0L1224.0 635.7L1214.9 658.5L1217.2 676.0"/><path d="M1038.1 719.7L1027.9 736.3L1009.6 738.6L986.8 740.9L964.0 743.1"/><path d="M1038.1 719.7L1032.4 745.4L1041.6 768.2L1043.8 784.2"/><path d="M964.0 740.9L991.4 736.3L1009.6 738.6"/><path d="M1100.9 708.9L1091.7 713.5L1089.5 727.2L1100.9 745.4L1123.7 750.0L1137.4 752.3L1132.8 777.4L1114.5 786.5L1105.4 804.7L1123.7 823.0L1128.2 836.7L1137.4 861.8"/><path d="M1160.2 726.0L1151.0 745.4L1146.5 768.2L1153.3 786.5L1155.6 804.7L1157.9 823.0"/><path d="M1187.5 708.9L1192.1 690.7L1183.0 677.0"/><path d="M1187.5 708.9L1189.8 729.5"/><path d="M1224.0 690.7L1233.2 711.2L1226.3 743.1"/><path d="M1351.8 721.5L1356.3 699.8L1370.0 686.1L1386.0 677.0"/><path d="M1041.6 784.2L1041.6 804.7L1046.1 823.0L1059.8 836.7"/><path d="M1073.5 804.7L1100.9 800.2L1123.7 795.6L1132.8 777.4"/><path d="M1246.8 677.0L1249.1 699.8L1244.6 722.6"/></g><g stroke="#cfcabf" stroke-width="1" stroke-dasharray="2.5 2"><path d="M168.4 476.0L175.3 487.4L179.8 503.4L186.7 514.8L191.2 518.2L182.1 521.6L183.3 533.0L191.2 542.1L195.8 553.6L201.5 557.0L206.1 565.0L207.2 576.4L214.1 590.1L220.9 600.3L230.0 595.8L240.3 594.6L243.7 582.1L251.7 580.5L257.4 587.8L264.2 593.5L273.4 593.5L280.2 603.7L289.3 612.9L298.4 619.7L300.7 635.7L305.3 653.9L312.1 667.6L316.7 676.7L320.1 677.0L322.4 695.2L332.7 708.9L334.9 729.5L330.4 737.4L346.4 736.3L357.8 740.9L364.6 750.0L373.7 752.3L382.8 740.9L403.4 734.0L405.7 747.7L414.8 747.7L417.1 734.0L428.5 735.2L442.2 745.4L455.8 752.3L460.4 768.2L467.2 779.6"/><path d="M195.8 555.8L186.7 560.4L173.0 565.0L168.4 576.4L166.1 582.1L154.7 580.9L149.0 574.1L142.2 583.2L138.8 594.6L131.9 606.0L127.4 622.0L121.7 635.7L118.2 645.9L125.1 656.2L134.2 667.6L139.9 676.7L136.5 677.0L137.6 690.7L147.9 699.8L143.3 718.1L147.9 736.3L146.8 752.3L159.3 766.0L166.1 775.1L182.1 770.5L195.8 772.8"/><path d="M100.0 607.2L105.7 608.3L106.8 617.4L109.1 631.1L117.1 645.9"/><path d="M300.7 618.6L307.6 610.6L313.3 599.2L325.8 593.5L334.9 585.5L350.9 580.9L360.0 576.4L368.0 558.1L385.1 554.7L384.0 542.1L396.5 536.4L398.8 521.6L402.2 507.9L414.8 510.2L418.2 492.0L423.9 480.6L433.0 476.0"/><path d="M485.5 476.0L487.8 498.8L492.3 521.6L494.6 544.4L498.0 567.2L492.3 585.5L485.5 599.2L478.6 617.4L479.8 635.7L477.5 653.9L471.8 676.7L465.0 677.0L462.7 699.8L455.8 722.6L455.8 752.3"/><path d="M195.8 772.8L209.5 784.2L211.8 795.6L236.9 795.6L250.5 791.1L252.8 779.6L264.2 779.6L282.5 793.3L300.7 788.8L309.9 779.6L314.4 763.7L312.1 745.4L305.3 722.6L309.9 702.1L320.1 690.7"/><path d="M195.8 772.8L186.7 786.5L177.6 800.2L186.7 809.3L204.9 816.1L214.1 825.3L207.2 834.4L193.5 845.8L195.8 859.5L209.5 857.2L214.1 868.6L227.7 866.3L236.9 873.2L248.3 859.5L259.7 845.8L273.4 837.8L282.5 841.2L289.3 850.4L284.8 864.0L300.7 866.3L314.4 877.0"/><path d="M193.5 845.8L182.1 859.5L170.7 866.3L173.0 877.0"/><path d="M467.2 779.6L467.2 795.6L474.1 804.7L485.5 813.9L492.3 827.5L487.8 836.7L474.1 850.4L455.8 864.0L449.0 877.0"/><path d="M501.5 729.5L510.6 713.5L522.0 708.9L532.0 713.5"/><path d="M487.8 745.4L492.3 752.3L487.8 763.7L501.5 761.4L510.6 745.4L501.5 729.5"/><path d="M559.4 476.0L563.9 489.7L561.7 505.7L557.1 519.3L568.5 526.2L584.5 530.7L602.7 535.3L611.8 530.7L618.7 522.8L623.2 526.2L622.1 544.4L623.2 567.2L621.0 590.1L618.7 606.0L634.6 609.4L650.6 622.0L668.9 631.1L682.5 633.4L691.7 633.4"/><path d="M751.0 476.0L755.5 487.4L760.1 501.1L773.8 505.7L779.5 511.4"/><path d="M853.6 513.6L846.8 511.4L835.4 514.8L825.1 519.3L822.8 530.7L812.6 529.6L802.3 525.0L794.3 513.6L779.5 511.4L773.8 514.8L777.2 521.6L770.4 530.7L769.2 542.1L782.9 545.6L792.0 546.7L790.9 558.1L798.9 562.7L798.9 587.8L792.0 587.8L785.2 582.1L771.5 587.8L754.4 585.5L744.1 592.3L730.4 594.6L721.3 603.7L705.4 612.9L694.0 615.1L689.4 624.3L691.7 633.4L678.0 643.7L668.9 645.9L655.2 647.1L648.3 676.0"/><path d="M943.7 636.8L954.0 624.3L964.0 617.4"/><path d="M917.5 644.8L897.0 656.2L878.7 663.0L860.5 672.2L851.3 676.0"/><path d="M655.2 677.0L657.5 681.6L650.6 690.7L632.4 688.4L618.7 690.7L621.0 702.1L611.8 711.2L616.4 720.3L623.2 729.5L641.5 734.0L652.9 738.6L657.5 752.3L662.0 768.2L659.7 781.9L641.5 777.4L634.6 788.8L623.2 795.6L614.1 791.1L602.7 784.2L600.4 770.5L582.2 768.2L561.7 766.0L554.8 756.8L557.1 740.9L545.7 722.6L532.0 718.1"/><path d="M659.7 781.9L678.0 772.8L696.2 770.5L715.6 773.9"/><path d="M627.8 795.6L632.4 813.9L627.8 836.7L641.5 850.4L646.1 864.0L639.2 877.0"/><path d="M744.1 694.1L760.1 699.8L769.2 720.3L778.4 718.1L776.1 702.1L798.9 702.1"/><path d="M801.2 683.8L817.1 699.8L853.6 702.1L860.5 686.1L869.6 677.0"/><path d="M906.1 724.9L887.8 736.3L874.2 754.6L865.0 777.4L869.6 800.2L881.0 818.4L887.8 834.4L883.3 850.4L865.0 864.0L862.7 877.0"/><path d="M964.0 615.1L991.4 608.3L1000.5 615.1L1023.3 610.6L1050.7 594.6L1068.9 599.2L1087.2 590.1L1110.0 594.6L1123.7 587.8L1137.4 599.2L1153.3 600.3"/><path d="M1110.0 594.6L1105.4 571.8L1114.5 551.3L1110.0 521.6L1123.7 512.5L1137.4 510.2L1155.6 523.9L1169.3 537.6L1189.8 526.2L1203.5 542.1L1203.5 567.2L1205.8 585.5L1219.5 599.2L1230.9 608.3L1224.0 619.7L1203.5 633.4L1192.1 663.0L1194.4 676.0"/><path d="M1155.6 523.9L1157.9 501.1L1176.1 496.5L1201.2 492.0L1214.9 487.4L1228.6 492.0"/><path d="M1153.3 617.4L1162.4 628.8L1169.3 617.4L1180.7 626.5L1173.9 649.4L1169.3 663.0L1178.4 676.0"/><path d="M1235.4 476.0L1242.3 494.2L1251.4 512.5L1260.5 535.3L1283.3 542.1L1308.4 530.7L1315.3 542.1"/><path d="M1324.4 551.3L1333.5 574.1L1347.2 594.6L1365.5 599.2L1372.3 617.4L1370.0 653.9L1351.8 665.3L1370.0 676.0"/><path d="M1310.7 640.2L1322.1 642.5L1319.8 658.5L1308.4 649.4L1313.0 667.6L1297.0 672.2L1278.8 665.3L1253.7 665.3L1251.4 676.0"/><path d="M1396.0 562.7L1388.3 571.8L1390.6 585.5L1396.0 590.1"/><path d="M1396.0 612.9L1388.3 617.4L1390.6 635.7L1374.6 635.7"/><path d="M1178.4 677.0L1173.9 690.7L1169.3 706.7L1171.6 718.1L1157.9 726.0L1146.5 743.1L1144.2 759.1L1146.5 777.4L1137.4 788.8L1123.7 795.6L1105.4 797.9L1082.6 791.1L1073.5 800.2L1075.8 809.3"/><path d="M1260.5 686.1L1262.8 702.1L1251.4 706.7L1249.1 718.1"/><path d="M1192.1 686.1L1210.4 690.7L1224.0 681.6L1237.7 686.1L1260.5 686.1"/><path d="M1132.8 800.2L1135.1 813.9L1126.0 823.0L1130.5 834.4L1146.5 834.4L1153.3 843.5"/><path d="M1283.3 677.0L1287.9 690.7"/></g><g stroke="#f3c4a3" stroke-width="1.7"><path d="M163.4 476.0L159.3 487.4L151.3 505.7L144.5 523.9L145.6 535.8L153.6 544.4L162.7 560.4L168.4 574.1L176.4 590.1L181.0 603.7L179.8 622.0L175.3 640.2L172.5 658.5L173.0 676.7L173.0 677.0L168.4 690.7L161.6 706.7L149.0 718.1L142.2 734.0L136.5 752.3L131.9 772.8L126.2 795.6L128.5 809.3L138.8 820.7L154.7 829.8L168.4 845.8L182.1 859.5L185.5 877.7"/><path d="M493.5 476.0L499.2 489.7L501.5 507.9L499.2 528.5L502.6 551.3L501.0 565.0L498.0 578.6L494.6 596.9L485.5 610.6L482.1 622.0L483.2 635.7L481.4 653.9L478.6 676.7L487.8 677.0L480.9 690.7L474.1 711.2L470.7 734.0L469.5 752.3L474.1 768.2L483.2 784.2L487.8 795.6L499.2 807.0L501.5 825.3L506.0 845.8L517.4 864.0L528.8 877.7"/><path d="M487.8 795.6L483.2 809.3L478.6 823.0L460.4 836.7L437.6 854.9L414.8 868.6L398.8 877.7"/><path d="M501.5 565.0L510.6 555.8L522.0 546.7L532.0 541.0L532.0 539.9L545.7 535.3L566.2 523.9L582.2 510.2L600.4 496.5L618.7 482.8L627.8 476.0"/><path d="M668.9 496.5L664.3 510.2L662.0 528.5L657.5 544.4L656.3 558.1L650.6 571.8L648.3 585.5"/><path d="M812.6 476.0L819.4 485.1L835.4 489.7L860.5 492.0L865.0 498.8L863.9 505.7"/><path d="M964.0 507.9L947.1 504.5L931.2 506.8L919.8 514.8L906.1 521.6L897.0 533.0L883.3 533.0L869.6 528.5"/><path d="M744.1 694.1L732.7 704.4L719.0 713.5L709.9 727.2L706.5 743.1L708.8 759.1L715.6 773.9L721.3 788.8L724.7 800.2L721.3 813.9L712.2 827.5L706.5 841.2L705.4 859.5L703.1 877.7"/><path d="M964.0 509.1L982.2 513.6L1007.3 519.3L1032.4 522.8L1043.8 521.6L1055.2 526.2L1064.4 527.3"/><path d="M1064.4 527.3L1071.2 510.2L1091.7 494.2L1112.3 482.8L1126.0 476.0"/><path d="M1071.2 510.2L1078.1 498.8L1087.2 485.1L1091.7 476.0"/><path d="M1039.3 525.0L1039.3 535.3L1048.4 542.1L1055.2 549.0L1068.9 554.7L1091.7 557.0L1123.7 561.5L1141.9 572.9L1160.2 574.5L1176.1 572.9L1201.2 573.6L1224.0 569.1L1246.8 567.2L1262.8 567.7L1283.3 569.5L1301.6 569.5L1319.8 551.3L1333.5 544.4L1358.6 534.2L1386.0 523.9L1397.4 522.8"/><path d="M1064.4 544.4L1071.2 553.6L1075.8 571.8L1079.2 594.6L1081.5 622.0L1083.8 649.4L1086.0 676.7L1087.2 677.0L1094.0 693.0L1100.9 708.9L1119.1 714.6L1137.4 724.9L1160.2 726.0L1180.7 728.3L1203.5 737.4L1221.8 745.4"/><path d="M1048.4 542.1L1032.4 551.3L1027.9 562.7L1009.6 574.1L995.9 582.1"/><path d="M1224.0 476.0L1229.7 494.2L1228.6 514.8L1237.7 539.9L1243.4 562.7L1244.6 583.2L1253.7 603.7L1260.5 622.0L1262.8 649.4L1262.8 676.7L1269.7 677.0L1274.2 690.7L1279.9 706.7"/><path d="M1338.1 476.0L1329.0 503.4L1324.4 530.7L1316.4 549.0L1301.6 567.2L1297.0 590.1L1298.2 617.4L1310.7 635.7L1319.8 649.4L1319.8 676.7L1319.8 677.0L1316.4 690.7L1313.0 708.9"/><path d="M1260.5 614.0L1278.8 602.6L1295.9 594.6"/><path d="M1176.1 576.4L1167.0 592.3L1153.3 608.3L1144.2 622.0L1133.9 632.2L1119.1 635.7"/><path d="M1362.0 493.1L1356.3 501.1L1351.8 521.6L1342.6 539.9"/><path d="M1105.4 877.7L1121.4 868.6L1135.1 860.6L1151.0 846.9L1156.7 836.7L1157.9 823.0L1167.0 811.6L1173.9 797.9L1183.0 784.2L1194.4 772.8L1205.8 763.7L1214.9 752.3L1221.8 745.4L1233.2 734.0L1249.1 722.6L1267.4 713.5L1281.1 706.7L1292.5 707.8L1310.7 711.2L1329.0 716.9L1351.8 721.5L1374.6 726.0L1397.4 734.0"/><path d="M1038.1 719.7L1055.2 699.8L1073.5 690.7L1087.2 693.0"/><path d="M1073.5 677.0L1078.1 690.7"/></g><g stroke="#f0e2a6" stroke-width="1.6"><path d="M300.7 544.4L304.2 534.2L319.0 528.5L338.4 514.8L349.8 498.8L352.1 487.4L350.9 476.0"/><path d="M501.5 565.0L504.9 574.1L512.9 572.9L514.0 566.1L510.6 560.4"/><path d="M341.8 795.6L346.4 809.3L355.5 825.3L369.2 841.2L378.3 854.9L387.4 866.3L394.3 873.6"/><path d="M1096.3 628.8L1094.0 640.2L1084.9 643.7"/><path d="M1133.9 632.2L1123.7 635.7"/><path d="M673.4 492.7L680.3 492.0L681.4 498.8L674.6 502.9L668.9 498.8"/></g><g stroke="#969078" stroke-width="1.4"><path d="M951.6 476.0L942.3 483.0L928.4 485.3L921.4 493.4L916.7 499.3L905.1 503.9L898.1 508.6L886.5 502.7L878.4 501.6L865.6 506.2L863.3 510.9L854.0 514.4L856.3 522.5L862.1 538.8L874.9 542.3L878.4 552.7L877.2 569.0L886.5 578.3L898.1 585.3L909.8 590.0L921.4 587.6L933.0 596.9L928.4 608.6L935.3 624.8L942.3 627.2L943.5 636.5L933.0 634.1L920.2 640.0L917.9 648.1L921.4 655.1L912.1 662.0L909.8 671.3L900.5 680.0L899.3 680.0L904.9 693.5L916.2 708.1L907.2 710.3L906.1 727.2L913.9 733.9L919.6 745.2L927.4 749.7L934.2 765.4L944.3 764.3L954.4 769.9L962.2 772.1L967.9 778.9L976.9 781.1L985.8 790.1L997.1 790.1L1000.4 795.7L1012.8 793.5L1015.1 796.9L1026.3 790.1L1039.8 786.7L1053.3 785.6L1056.6 780.0L1065.6 780.4L1063.4 790.1L1072.4 803.6L1071.2 812.6L1061.1 821.6L1060.0 832.8L1044.3 841.8L1039.8 853.0L1029.7 862.0L1028.5 878.9"/></g></g><g font-family="Liberation Sans, sans-serif" stroke="#fff" stroke-width="1.8" stroke-opacity=".85" stroke-linejoin="round" paint-order="stroke"><text x="113.9" y="531.8" font-size="11.0" fill="#55808f" textLength="54.3" lengthAdjust="spacingAndGlyphs">Saint-Flour</text><circle cx="141.8" cy="536.6" r="1.6" fill="#111" stroke="none"/><text x="255.5" y="527.2" font-size="12.3" fill="#55808f" textLength="91.4" lengthAdjust="spacingAndGlyphs">Le Puy-en-Velay</text><circle cx="300.9" cy="533.0" r="1.6" fill="#111" stroke="none"/><text x="481.6" y="559.5" font-size="12.5" fill="#55808f" textLength="44.2" lengthAdjust="spacingAndGlyphs">Valence</text><circle cx="503.6" cy="565.7" r="1.6" fill="#111" stroke="none"/><text x="514.4" y="516.6" font-size="11.0" fill="#55808f" textLength="43.6" lengthAdjust="spacingAndGlyphs">Romans-</text><text x="514.4" y="528.6" font-size="11.0" fill="#55808f" textLength="43.6" lengthAdjust="spacingAndGlyphs">sur-Isère</text><circle cx="535.6" cy="533.2" r="1.6" fill="#111" stroke="none"/><text x="648.3" y="487.0" font-size="12.3" fill="#55808f" textLength="50.7" lengthAdjust="spacingAndGlyphs">Grenoble</text><circle cx="673.4" cy="492.7" r="1.6" fill="#111" stroke="none"/><text x="429.8" y="617.0" font-size="11.0" fill="#55808f" textLength="29.8" lengthAdjust="spacingAndGlyphs">Privas</text><circle cx="444.3" cy="621.7" r="1.6" fill="#111" stroke="none"/><text x="448.0" y="666.5" font-size="11.0" fill="#55808f" textLength="54.3" lengthAdjust="spacingAndGlyphs">Montélimar</text><circle cx="475.0" cy="672.0" r="1.6" fill="#111" stroke="none"/><text x="204.9" y="677.0" font-size="12.5" fill="#55808f" textLength="36.5" lengthAdjust="spacingAndGlyphs">Mende</text><circle cx="223.2" cy="683.2" r="1.6" fill="#111" stroke="none"/><text x="457.0" y="745.0" font-size="11.0" fill="#55808f" textLength="35.8" lengthAdjust="spacingAndGlyphs">Bollène</text><circle cx="474.5" cy="750.4" r="1.6" fill="#111" stroke="none"/><text x="467.2" y="784.2" font-size="12.5" fill="#55808f" textLength="40.0" lengthAdjust="spacingAndGlyphs">Orange</text><circle cx="486.6" cy="790.4" r="1.6" fill="#111" stroke="none"/><text x="331.5" y="788.8" font-size="11.0" fill="#55808f" textLength="20.1" lengthAdjust="spacingAndGlyphs">Alès</text><circle cx="341.3" cy="794.0" r="1.6" fill="#111" stroke="none"/><text x="124.0" y="795.6" font-size="11.0" fill="#55808f" textLength="28.5" lengthAdjust="spacingAndGlyphs">Millau</text><circle cx="138.1" cy="800.9" r="1.6" fill="#111" stroke="none"/><text x="379.4" y="868.1" font-size="12.5" fill="#55808f" textLength="35.4" lengthAdjust="spacingAndGlyphs">Nîmes</text><circle cx="396.5" cy="874.3" r="1.6" fill="#111" stroke="none"/><text x="696.2" y="768.2" font-size="11.0" fill="#55808f" textLength="38.8" lengthAdjust="spacingAndGlyphs">Sisteron</text><circle cx="715.6" cy="773.9" r="1.6" fill="#111" stroke="none"/><text x="825.1" y="715.3" font-size="10.5" fill="#55808f" textLength="66.2" lengthAdjust="spacingAndGlyphs">Barcelonnette</text><circle cx="857.7" cy="720.3" r="1.6" fill="#111" stroke="none"/><text x="1047.3" y="518.7" font-size="15.5" fill="#3b4650" font-weight="bold" textLength="37.6" lengthAdjust="spacingAndGlyphs">Turin</text><circle cx="1065.5" cy="527.3" r="2.0" fill="#111" stroke="none"/><text x="1161.3" y="568.4" font-size="11.5" fill="#55808f" textLength="19.9" lengthAdjust="spacingAndGlyphs">Asti</text><circle cx="1171.1" cy="574.8" r="1.6" fill="#111" stroke="none"/><text x="1224.0" y="564.5" font-size="12.0" fill="#55808f" textLength="59.3" lengthAdjust="spacingAndGlyphs">Alexandrie</text><circle cx="1253.7" cy="571.1" r="1.6" fill="#111" stroke="none"/><text x="1313.7" y="543.3" font-size="11.0" fill="#55808f" textLength="38.1" lengthAdjust="spacingAndGlyphs">Voghera</text><circle cx="1332.4" cy="548.5" r="1.6" fill="#111" stroke="none"/><text x="1348.4" y="487.0" font-size="11.5" fill="#55808f" textLength="28.5" lengthAdjust="spacingAndGlyphs">Pavie</text><circle cx="1362.0" cy="493.1" r="1.6" fill="#111" stroke="none"/><text x="1026.0" y="713.0" font-size="11.5" fill="#55808f" textLength="24.7" lengthAdjust="spacingAndGlyphs">Coni</text><circle cx="1038.1" cy="719.7" r="1.6" fill="#111" stroke="none"/><text x="1206.9" y="736.3" font-size="11.5" fill="#55808f" textLength="39.3" lengthAdjust="spacingAndGlyphs">Savone</text><circle cx="1226.3" cy="742.7" r="1.6" fill="#111" stroke="none"/><text x="1298.9" y="706.7" font-size="14.0" fill="#3b4650" font-weight="bold" textLength="38.7" lengthAdjust="spacingAndGlyphs">Gênes</text><circle cx="1317.8" cy="714.6" r="2.0" fill="#111" stroke="none"/><text x="1359.8" y="724.9" font-size="11.0" fill="#55808f" textLength="36.7" lengthAdjust="spacingAndGlyphs">Rapallo</text><circle cx="1377.3" cy="730.4" r="1.6" fill="#111" stroke="none"/><text x="1113.4" y="854.9" font-size="12.0" fill="#55808f" textLength="43.3" lengthAdjust="spacingAndGlyphs">Imperia</text><circle cx="1135.1" cy="860.9" r="1.6" fill="#111" stroke="none"/><text x="1058.7" y="873.2" font-size="12.0" fill="#55808f" textLength="51.3" lengthAdjust="spacingAndGlyphs">Sanremo</text></g><ellipse cx="689.4" cy="747" rx="8" ry="1.8" fill="#c9c9c9"/><path d="M689.4 746.6C684 739 676.9 735.5 676.9 729.3a12.5 12.5 0 0 1 25 0C701.9 735.5 694.8 739 689.4 746.6Z" fill="#e8234d"/><circle cx="517.2" cy="745.5" r="19.0" fill="#ee7b3f" fill-opacity="1"/><text x="517.2" y="749.5" font-family="Liberation Sans, sans-serif" font-weight="bold" font-size="11" fill="#fbdcc3" text-anchor="middle">21</text><circle cx="507.8" cy="840.0" r="49.3" fill="#ee7b3f" fill-opacity="0.5"/><text x="507.8" y="844.0" font-family="Liberation Sans, sans-serif" font-weight="bold" font-size="11" fill="#fbe3d3" text-anchor="middle">126</text><circle cx="742.9" cy="671.5" r="19.0" fill="#ee7b3f" fill-opacity="1"/><text x="742.9" y="675.5" font-family="Liberation Sans, sans-serif" font-weight="bold" font-size="11" fill="#fbdcc3" text-anchor="middle">3</text><circle cx="853.0" cy="573.0" r="19.3" fill="#ee7b3f" fill-opacity="1"/><text x="853.0" y="577.0" font-family="Liberation Sans, sans-serif" font-weight="bold" font-size="11" fill="#fbdcc3" text-anchor="middle">2</text><circle cx="759.4" cy="795.4" r="19.3" fill="#ee7b3f" fill-opacity="1"/><text x="759.4" y="799.4" font-family="Liberation Sans, sans-serif" font-weight="bold" font-size="11" fill="#fbdcc3" text-anchor="middle">4</text><circle cx="698.5" cy="868.0" r="19.0" fill="#ee7b3f" fill-opacity="1"/><text x="698.5" y="872.0" font-family="Liberation Sans, sans-serif" font-weight="bold" font-size="11" fill="#fbdcc3" text-anchor="middle">4</text><circle cx="907.4" cy="841.5" r="19.0" fill="#ee7b3f" fill-opacity="1"/><text x="907.4" y="845.5" font-family="Liberation Sans, sans-serif" font-weight="bold" font-size="11" fill="#fbdcc3" text-anchor="middle">2</text><circle cx="1027.2" cy="832.5" r="19.0" fill="#ee7b3f" fill-opacity="1"/><text x="1027.2" y="836.5" font-family="Liberation Sans, sans-serif" font-weight="bold" font-size="11" fill="#fbdcc3" text-anchor="middle">5</text><circle cx="829.8" cy="868.1" r="12.7" fill="#a9c81c" fill-opacity="1"/><circle cx="616.4" cy="893.5" r="19.0" fill="#ee7b3f" fill-opacity="1"/><circle cx="965.6" cy="920.3" r="50.0" fill="#ee7b3f" fill-opacity="0.5"/></g></svg>
<div class="abs" id="n1" style="left:360.5px;top:44.00px;font-size:14.5px;color:#fff;font-weight:bold;letter-spacing:0.036px;">Documentation</div>
<div class="abs" id="n2" style="left:497.3px;top:44.00px;font-size:14.5px;color:#fff;font-weight:bold;letter-spacing:-0.230px;">Annuaire</div>
<div class="abs" id="n3" style="left:588.5px;top:44.00px;font-size:14.5px;color:#fff;font-weight:bold;letter-spacing:-0.146px;">Boîte à outils</div>
<div class="abs" id="n4" style="left:707.3px;top:44.00px;font-size:14.5px;color:#fff;font-weight:bold;letter-spacing:-0.051px;">Actualités</div>
<div class="abs" id="n5" style="left:806.7px;top:44.00px;font-size:14.5px;color:#fff;font-weight:bold;letter-spacing:-0.317px;">Qui sommes-nous ?</div>
<div class="abs" id="lg1" style="left:119.6px;top:39.00px;font-size:44.5px;color:#16334d;font-weight:bold;-webkit-text-stroke:0.6px #16334d;transform:scaleX(1.0152);transform-origin:0 0;">ARCA</div>
<div class="abs" id="lg2" style="left:258.0px;top:54.00px;font-size:26.8px;color:#16334d;transform:scaleX(1.1785);transform-origin:0 0;">Sud</div>
<div class="abs" id="lg3" style="left:155.2px;top:94.00px;font-size:12.8px;color:#a08d6e;font-family:'Liberation Serif',serif;transform:scaleX(1.1992);transform-origin:0 0;">SANTÉ ET ADDICTION</div>
<div class="abs" id="tel1" style="left:1293.6px;top:77.00px;font-size:23.0px;color:#fff;font-weight:bold;-webkit-text-stroke:0.5px #fff;transform:scaleX(1.0334);transform-origin:0 0;">04 88 926 888</div>
<div class="abs" id="abo1" style="left:1516.2px;top:82.00px;font-size:16.0px;color:#fff;font-weight:bold;letter-spacing:0.257px;">Abonnez-vous !</div>
<div class="abs" id="bc1" style="left:125.3px;top:207.00px;font-size:14.5px;color:#bdb8b0;letter-spacing:0.536px;">Accueil</div>
<div class="abs" id="bc2" style="left:185.9px;top:208.00px;font-size:13.0px;color:#bdb8b0;letter-spacing:-0.994px;">&gt;</div>
<div class="abs" id="bc3" style="left:198.5px;top:207.00px;font-size:14.5px;color:#8e8577;font-weight:bold;letter-spacing:0.157px;">Annuaire</div>
<div class="abs" id="h1" style="left:100.7px;top:262.00px;font-size:39.5px;color:#0b5468;font-weight:bold;-webkit-text-stroke:0.5px #0b5468;transform:scaleX(1.0023);transform-origin:0 0;">Annuaire</div>
<div class="abs" id="p1" style="left:100.4px;top:338.00px;font-size:16.0px;color:#3c3c3c;letter-spacing:0.665px;">Retrouvez les structures et établissements spécialisés de la région Sud Provence-Alpes-Côte-d'Azur</div>
<div class="abs" id="tb1" style="left:684.0px;top:397.00px;font-size:11.5px;color:#fff;letter-spacing:0.844px;">CARTE</div>
<div class="abs" id="tb2" style="left:778.9px;top:397.00px;font-size:11.5px;color:#8e8577;letter-spacing:1.020px;">TABLEAU</div>
<div class="abs" id="r1" style="left:100.1px;top:434.00px;font-size:24.0px;color:#e8901a;font-weight:bold;transform:scaleX(1.0862);transform-origin:0 0;">773</div>
<div class="abs" id="r2" style="left:148.0px;top:441.00px;font-size:15.0px;color:#e3a041;letter-spacing:0.500px;">résultats</div>
<div class="abs" id="o1" style="left:1471.2px;top:355.00px;font-size:19.5px;color:#fff;font-weight:bold;letter-spacing:0.100px;text-decoration:underline;text-decoration-thickness:1.5px;text-underline-offset:2px;">Lignes d'écoute et numéros</div>
<div class="abs" id="o2" style="left:1471.2px;top:380.00px;font-size:19.5px;color:#fff;font-weight:bold;letter-spacing:0.310px;text-decoration:underline;text-decoration-thickness:1.5px;text-underline-offset:2px;">d'urgence</div>
<div class="abs" id="g1" style="left:1471.2px;top:473.00px;font-size:14.5px;color:#454545;font-weight:bold;letter-spacing:0.273px;">Vous souhaitez apparaître sur cet</div>
<div class="abs" id="g2" style="left:1471.2px;top:494.00px;font-size:14.5px;color:#454545;font-weight:bold;letter-spacing:-0.053px;">annuaire ?</div>
<div class="abs" id="g3" style="left:1471.2px;top:530.00px;font-size:14.5px;color:#d9693a;letter-spacing:0.512px;">Pour référencer votre structure, remplissez</div>
<div class="abs" id="g4" style="left:1471.2px;top:550.00px;font-size:14.5px;color:#d9693a;letter-spacing:0.531px;">notre formulaire en ligne.</div>
<div class="abs" id="f1" style="left:1482.1px;top:629.00px;font-size:14.7px;color:#4a443c;font-weight:bold;letter-spacing:0.225px;">Recherche libre</div>
<div class="abs" id="f2" style="left:1564.8px;top:713.00px;font-size:13.0px;color:#8a857c;letter-spacing:-0.261px;">Opérateur</div>
<div class="abs" id="f3" style="left:1635.3px;top:716.00px;font-size:13.3px;color:#111;letter-spacing:0.211px;">Et</div>
<div class="abs" id="f4" style="left:1482.1px;top:776.00px;font-size:14.7px;color:#4a443c;font-weight:bold;letter-spacing:0.253px;">Domaine d'intervention</div>
<div class="abs" id="f5" style="left:1487.0px;top:818.00px;font-size:14.4px;color:#444;letter-spacing:0.024px;">Addictologie (produit ou comportement)</div>
<div class="abs" id="f6" style="left:1750.0px;top:820.00px;font-size:11.5px;color:#555;letter-spacing:0.271px;">363</div>
<div class="abs" id="f7" style="left:1487.0px;top:853.00px;font-size:14.4px;color:#444;letter-spacing:-0.234px;">Centre de ressources</div>
<div class="abs" id="f8" style="left:1758.0px;top:856.00px;font-size:11.5px;color:#555;letter-spacing:-0.148px;">16</div>
<svg class="full" viewBox="0 0 1902 877"><g fill="#2fe010"><path d="M1136.5 307.6L1134.5 318.4L1332.2 355.2L1328.2 377L1388 359.7L1338.6 323.4L1334.4 344.4Z"/><path d="M1418.3 206.8L1426.3 201.2L1474.5 265.5L1492.2 253.3L1502.1 313.7L1447.9 285.4L1465.4 273Z"/><path d="M1666.7 199.5L1677.6 203.6L1655.5 260.6L1675.8 268.9L1630.4 309.9L1624.7 248.4L1644.8 256.2Z"/></g></svg>
</body>
</html>
